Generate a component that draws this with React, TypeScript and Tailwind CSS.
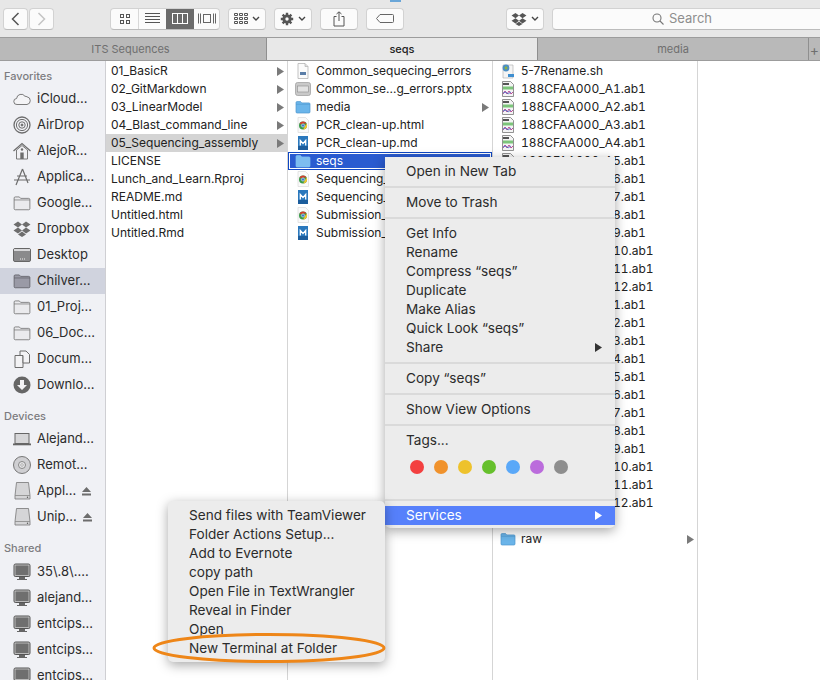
import React from "react"

const font = { fontFamily: "Inter, 'Liberation Sans', sans-serif" }

function Folder({ color = "#6bb5ea", dark = "#4f97cf", size = 16 }: { color?: string; dark?: string; size?: number }) {
  return (
    <svg width={size} height={size} viewBox="0 0 16 16" className="shrink-0">
      <path d="M1 3.5C1 3 1.4 2.6 2 2.6h3.6l1.2 1.3H14c.6 0 1 .4 1 1V13c0 .6-.4 1-1 1H2c-.6 0-1-.4-1-1z" fill={color} stroke={dark} strokeWidth="0.7" />
      <path d="M1 5.3h14" stroke={dark} strokeWidth="0.6" />
    </svg>
  )
}

function Ab1Icon() {
  return (
    <svg width="16" height="16" viewBox="0 0 16 16" className="shrink-0">
      <path d="M2.5 .5h8l3 3v12h-11z" fill="#f4f4f4" stroke="#777" strokeWidth="0.8" />
      <rect x="3" y="5.5" width="10" height="3" fill="#7cc47a" />
      <rect x="3" y="2" width="6" height="2" fill="#555" />
      <path d="M3 13l2-3 2 3 2-3 2 3 2-2" fill="none" stroke="#b33a8c" strokeWidth="0.9" />
      <path d="M3 12l3-1 2 2 3-2" fill="none" stroke="#3760c4" strokeWidth="0.7" />
    </svg>
  )
}

function ChromeIcon() {
  return (
    <svg width="16" height="16" viewBox="0 0 16 16" className="shrink-0">
      <path d="M3 .5h7.5l3 3v12H3z" fill="#fafafa" stroke="#d5d5d5" strokeWidth="0.6" />
      <circle cx="8" cy="8.5" r="4" fill="#3a9a4b" />
      <path d="M8 4.5a4 4 0 0 1 3.5 2H8a2 2 0 0 0-2 1L4.6 6.4A4 4 0 0 1 8 4.5z" fill="#d9392e" />
      <path d="M11.6 6.5a4 4 0 0 1-3.4 6l1.6-3z" fill="#f4c430" />
      <circle cx="8" cy="8.5" r="1.6" fill="#3e76d6" stroke="#fff" strokeWidth="0.5" />
    </svg>
  )
}

function MarkdownIcon() {
  return (
    <svg width="16" height="16" viewBox="0 0 16 16" className="shrink-0">
      <rect x="3" y="1" width="10" height="14" fill="#2a78bd" />
      <rect x="3" y="11" width="10" height="4" fill="#1c5d9c" />
      <path d="M5.3 10.5V5.5l2.7 3 2.7-3v5" fill="none" stroke="#fff" strokeWidth="1.3" />
    </svg>
  )
}

function PptxIcon() {
  return (
    <svg width="16" height="16" viewBox="0 0 16 16" className="shrink-0">
      <rect x="0.5" y="1.5" width="15" height="13" rx="2" fill="#c9c9c9" stroke="#999" strokeWidth="0.7" />
      <rect x="2.5" y="5" width="11" height="6" fill="#e2e2e2" stroke="#8d8d8d" strokeWidth="0.6" />
    </svg>
  )
}

function DocIcon() {
  return (
    <svg width="16" height="16" viewBox="0 0 16 16" className="shrink-0">
      <path d="M3 .5h7l3 3v12H3z" fill="#fbfbfb" stroke="#aaa" strokeWidth="0.7" />
      <path d="M10 .5v3h3" fill="#ddd" stroke="#aaa" strokeWidth="0.6" />
      <rect x="5" y="9" width="6" height="3" fill="#5b7ea8" />
    </svg>
  )
}

function ShellIcon() {
  return (
    <svg width="16" height="16" viewBox="0 0 16 16" className="shrink-0">
      <path d="M3 2h10v13H3z" fill="#f5f5f5" stroke="#aaa" strokeWidth="0.6" />
      <rect x="8" y="11" width="6" height="3" fill="#3f8fd0" />
      <circle cx="6" cy="5" r="3.4" fill="#4c8fc4" />
      <circle cx="6" cy="5" r="1.4" fill="#8fb23e" />
    </svg>
  )
}

function Caret({ color = "#7a7a7a" }: { color?: string }) {
  return (
    <svg width="7" height="9" viewBox="0 0 7 9" className="shrink-0">
      <path d="M0 0l7 4.5L0 9z" fill={color} />
    </svg>
  )
}

function Chevron() {
  return (
    <svg width="8" height="6" viewBox="0 0 8 6">
      <path d="M1 1l3 3 3-3" fill="none" stroke="#444" strokeWidth="1.4" />
    </svg>
  )
}

function SideIcon({ kind }: { kind: string }) {
  const s = "#6d6d6d"
  if (kind === "cloud")
    return (
      <svg width="18" height="18" viewBox="0 0 18 18" className="shrink-0">
        <path d="M4 14.5a3 3 0 0 1-.4-6A4.6 4.6 0 0 1 12 6.3a3 3 0 0 1 2 .5 3.9 3.9 0 0 1 0 7.7z" fill="#f4f4f6" stroke={s} strokeWidth="0.9" />
      </svg>
    )
  if (kind === "airdrop")
    return (
      <svg width="18" height="18" viewBox="0 0 18 18" fill="none" stroke={s} className="shrink-0">
        <circle cx="9" cy="9" r="8" strokeWidth="1.3" />
        <circle cx="9" cy="9" r="5.6" strokeWidth="1" />
        <circle cx="9" cy="9" r="3.2" strokeWidth="1" />
        <circle cx="9" cy="9" r="1" fill={s} />
      </svg>
    )
  if (kind === "home")
    return (
      <svg width="18" height="18" viewBox="0 0 18 18" className="shrink-0">
        <path d="M.5 9L9 1.5 17.5 9" fill="none" stroke={s} strokeWidth="1.3" />
        <path d="M3.5 8v9h11V8L9 3.5z" fill="#f0f0f3" stroke={s} strokeWidth="0.9" />
        <rect x="7.3" y="10.5" width="3.4" height="6.5" fill={s} />
        <circle cx="9" cy="7.5" r="1.2" fill={s} />
      </svg>
    )
  if (kind === "apps")
    return (
      <svg width="18" height="18" viewBox="0 0 18 18" fill="none" stroke={s} strokeWidth="1.2" className="shrink-0">
        <path d="M9.5 1L3 17M9.5 1l5.5 14M1 12h16M4 8l10 0" />
      </svg>
    )
  if (kind === "dropbox")
    return (
      <svg width="18" height="18" viewBox="0 0 18 18" fill={s} className="shrink-0">
        <path d="M5 1.5L.5 4.5 5 7.5l4-3zM13 1.5l4.5 3-4.5 3-4-3zM5 7.5l-4.5 3 4.5 3 4-3zM13 7.5l4.5 3-4.5 3-4-3zM5 14.4l4-2.8 4 2.8-4 2.6z" />
      </svg>
    )
  if (kind === "desktop")
    return (
      <svg width="18" height="16" viewBox="0 0 18 16" className="shrink-0">
        <rect x="0.5" y="1.5" width="17" height="13" rx="1.5" fill="#8a8a8c" stroke="#666" />
        <rect x="1" y="2" width="16" height="2" fill="#d8d8da" />
        <path d="M7 12h1M9 12h1M11 12h1" stroke="#eee" strokeWidth="1.2" />
      </svg>
    )
  if (kind === "folder") return <Folder color="#eaeaed" dark="#6d6d6d" size={18} />
  if (kind === "folderSel") return <Folder color="#9a9aa6" dark="#5b5b62" size={18} />
  if (kind === "docs")
    return (
      <svg width="18" height="18" viewBox="0 0 18 18" fill="#f3f3f5" stroke={s} strokeWidth="1" className="shrink-0">
        <path d="M2 5.5h8v12H2z" />
        <path d="M7 1h6l3.5 3.5V13H10V5.5H7z" />
      </svg>
    )
  if (kind === "down")
    return (
      <svg width="18" height="18" viewBox="0 0 18 18" className="shrink-0">
        <circle cx="9" cy="9" r="8.5" fill="#666" />
        <path d="M7 4h4v5h3l-5 5-5-5h3z" fill="#f3f3f5" />
      </svg>
    )
  if (kind === "laptop")
    return (
      <svg width="18" height="14" viewBox="0 0 18 14" className="shrink-0">
        <rect x="2" y="1.5" width="14" height="10" fill="#d6d6d8" stroke="#666" />
        <rect x="0" y="11.5" width="18" height="1.8" fill="#666" />
      </svg>
    )
  if (kind === "disc")
    return (
      <svg width="18" height="18" viewBox="0 0 18 18" className="shrink-0">
        <circle cx="9" cy="9" r="8.5" fill="#cfcfd2" stroke="#777" />
        <circle cx="9" cy="9" r="3.5" fill="#e7e7e9" stroke="#888" />
        <circle cx="9" cy="9" r="1.3" fill="#f7f7f8" stroke="#888" strokeWidth="0.6" />
      </svg>
    )
  if (kind === "drive")
    return (
      <svg width="17" height="18" viewBox="0 0 17 18" className="shrink-0">
        <path d="M2.500.5h12L16 13.500v3.500H1v-3.500z" fill="#d5d5d7" stroke="#777" strokeWidth="0.8" />
        <path d="M1 13.500h15" stroke="#888" strokeWidth="0.8" />
        <circle cx="13.500" cy="15.300" r="0.7" fill="#555" />
      </svg>
    )
  return (
    <svg width="18" height="18" viewBox="0 0 18 18" className="shrink-0">
      <rect x="1" y="1" width="16" height="12.500" rx="1.500" fill="#666" stroke="#555" />
      <rect x="2" y="2" width="14" height="10.500" fill="#6f6f6f" stroke="#eee" strokeWidth="0.6" />
      <path d="M6 14h6v2h2v1H4v-1h2z" fill="#666" />
    </svg>
  )
}

function SideRow({ icon, label, selected, eject }: { icon: string; label: string; selected?: boolean; eject?: boolean }) {
  return (
    <div className={`flex h-[26px] items-center gap-[6px] pl-[13px] text-[13px] text-[#2c2c2c] ${selected ? "bg-[#d0d3de]" : ""}`}>
      <span className="flex w-[18px] shrink-0 justify-center">
        <SideIcon kind={icon} />
      </span>
      <span className="whitespace-nowrap">{label}</span>
      {eject && (
        <svg width="9" height="9" viewBox="0 0 9 9" className="ml-auto mr-[14px] shrink-0">
          <path d="M4.500 0L9 5H0zM0 6.500h9V8.500H0z" fill="#6d6d6d" />
        </svg>
      )}
    </div>
  )
}

function SideHead({ children, className = "" }: { children: React.ReactNode; className?: string }) {
  return <div className={`flex h-[28px] items-end pl-[4px] text-[11px] font-medium text-[#7c7c80] ${className}`}>{children}</div>
}

function Row({ icon, label, caret, className = "" }: { icon?: React.ReactNode; label: string; caret?: boolean; className?: string }) {
  return (
    <div className={`flex h-[18px] items-center whitespace-nowrap pr-[3px] text-[12px] text-[#222] ${icon ? "pl-[6px]" : "pl-[5px]"} ${className}`}>
      {icon && <span className="mr-[5px] flex w-[17px] justify-center">{icon}</span>}
      <span className="flex-1 overflow-hidden">{label}</span>
      {caret && <Caret />}
    </div>
  )
}

function ToolBtn({ children, className = "" }: { children: React.ReactNode; className?: string }) {
  return (
    <div className={`flex h-[22px] shrink-0 items-center justify-center gap-[4px] rounded-[4px] border border-[#d2d2d2] border-b-[#bcbcbc] bg-[#fbfbfb] ${className}`}>
      {children}
    </div>
  )
}

function Sep() {
  return <div className="my-[5px] h-[2px] bg-[#dadada]" />
}

function MenuItem({ label, arrow, active }: { label: string; arrow?: boolean; active?: boolean }) {
  return (
    <div className={`flex h-[19px] items-center justify-between pl-[21px] pr-[13px] text-[13.600px] ${active ? "bg-[#5680fb] text-white" : "text-[#2b2b2b]"}`}>
      <span className="whitespace-nowrap">{label}</span>
      {arrow && <Caret color={active ? "#ffffff" : "#333333"} />}
    </div>
  )
}

const col1 = ["01_BasicR", "02_GitMarkdown", "03_LinearModel", "04_Blast_command_line", "05_Sequencing_assembly"]
const col1b = ["LICENSE", "Lunch_and_Learn.Rproj", "README.md", "Untitled.html", "Untitled.Rmd"]
const wells = ["A", "B"].flatMap((l) => Array.from({ length: 12 }, (_, i) => `188CFAA000_${l}${i + 1}.ab1`))
const tagColors = ["bg-[#f34040]", "bg-[#f0922c]", "bg-[#eec22c]", "bg-[#66c02c]", "bg-[#5aa8f8]", "bg-[#bb6cdc]", "bg-[#8e8e8e]"]

export default function App() {
  return (
    <div className="relative flex h-[680px] w-[820px] flex-col overflow-hidden bg-white" style={font}>
      {/* toolbar */}
      <div className="flex h-[37px] shrink-0 items-center bg-[#e7e7e7] pl-[3px]">
        <ToolBtn className="w-[25px]">
          <svg width="9" height="14" viewBox="0 0 9 14"><path d="M7.500 1L1.500 7l6 6" fill="none" stroke="#555" strokeWidth="1.500" /></svg>
        </ToolBtn>
        <ToolBtn className="ml-[1px] w-[25px]">
          <svg width="9" height="14" viewBox="0 0 9 14"><path d="M1.500 1l6 6-6 6" fill="none" stroke="#c4c4c4" strokeWidth="1.500" /></svg>
        </ToolBtn>
        <div className="ml-[56px] flex h-[22px] w-[110px] shrink-0 overflow-hidden rounded-[4px] border border-[#d2d2d2] border-b-[#bcbcbc] bg-[#fbfbfb]">
          <div className="flex w-[28px] items-center justify-center border-r border-[#d8d8d8]">
            <svg width="12" height="12" viewBox="0 0 12 12" fill="none" stroke="#555"><rect x="1.500" y="1.500" width="3" height="3" /><rect x="7.500" y="1.500" width="3" height="3" /><rect x="1.500" y="7.500" width="3" height="3" /><rect x="7.500" y="7.500" width="3" height="3" /></svg>
          </div>
          <div className="flex w-[27px] items-center justify-center">
            <svg width="15" height="11" viewBox="0 0 15 11" stroke="#555"><path d="M0 .500h15M0 3.500h15M0 6.500h15M0 9.500h15" /></svg>
          </div>
          <div className="flex w-[28px] items-center justify-center bg-[#6b6b6b]">
            <svg width="16" height="11" viewBox="0 0 16 11" fill="none" stroke="#fff"><rect x=".500" y=".500" width="15" height="10" /><path d="M5.500 .500v10M10.500 .500v10" /></svg>
          </div>
          <div className="flex flex-1 items-center justify-center">
            <svg width="18" height="11" viewBox="0 0 18 11" fill="none" stroke="#666"><rect x="5.500" y="1.500" width="7" height="8" /><path d="M.500 .500v10M2.500 .500v10M15.500 .500v10M17.500 .500v10" /></svg>
          </div>
        </div>
        <ToolBtn className="ml-[8px] w-[38px]">
          <svg width="14" height="12" viewBox="0 0 14 12" fill="none" stroke="#555"><path d="M.500 .500h3v2h-3zM5.500 .500h3v2h-3zM10.500 .500h3v2h-3zM.500 4.500h3v2h-3zM5.500 4.500h3v2h-3zM10.500 4.500h3v2h-3zM.500 8.500h3v2h-3zM5.500 8.500h3v2h-3zM10.500 8.500h3v2h-3z" /></svg>
          <Chevron />
        </ToolBtn>
        <ToolBtn className="ml-[8px] w-[38px]">
          <svg width="14" height="14" viewBox="0 0 14 14"><path d="M7 7V.800M7 7v6.200M7 7H.800M7 7h6.200M7 7L2.600 2.600M7 7l4.400 4.400M7 7l4.400-4.400M7 7l-4.400 4.400" stroke="#555" strokeWidth="2.400" /><circle cx="7" cy="7" r="4.600" fill="#555" /><circle cx="7" cy="7" r="1.700" fill="#fbfbfb" /></svg>
          <Chevron />
        </ToolBtn>
        <ToolBtn className="ml-[8px] w-[38px]">
          <svg width="12" height="16" viewBox="0 0 12 16" fill="none" stroke="#555"><path d="M3.500 5.500H1v9.500h10V5.500H8.500M6 10V1M3.500 3L6 .800 8.500 3" /></svg>
        </ToolBtn>
        <ToolBtn className="ml-[8px] w-[38px]">
          <svg width="18" height="9" viewBox="0 0 18 9" fill="none" stroke="#666"><path d="M4 .500h12.500a1 1 0 0 1 1 1v6a1 1 0 0 1-1 1H4L.500 4.500z" /></svg>
        </ToolBtn>
        <ToolBtn className="ml-[102px] w-[38px]">
          <svg width="16" height="14" viewBox="0 0 18 16" fill="#555"><path d="M5 1L.500 4 5 7l4-3zM13 1l4.500 3L13 7 9 4zM5 7L.500 10 5 13l4-3zM13 7l4.500 3L13 13l-4-3zM5 13.800l4-2.800 4 2.800L9 16z" /></svg>
          <Chevron />
        </ToolBtn>
        <div className="ml-[8px] flex h-[22px] w-[280px] shrink-0 items-center justify-center gap-[5px] rounded-[4px] border border-[#d2d2d2] border-b-[#bcbcbc] bg-[#fbfbfb] pr-[20px] text-[13px] text-[#8e8e8e]">
          <svg width="12" height="12" viewBox="0 0 12 12" fill="none" stroke="#777" strokeWidth="1.100"><circle cx="5" cy="5" r="4" /><path d="M8 8l3.500 3.500" /></svg>
          Search
        </div>
      </div>

      {/* tab bar */}
      <div className="flex h-[24px] shrink-0 border-y border-[#9c9c9c] text-[11px]">
        <div className="flex w-[267px] items-center justify-center border-r border-[#8f8f8f] bg-[#b9b9b9] pr-[5px] text-[#6f6f6f]">ITS Sequences</div>
        <div className="flex w-[271px] items-center justify-center border-r border-[#8f8f8f] bg-[#e8e8e8] font-medium text-[#222]">seqs</div>
        <div className="flex w-[271px] items-center justify-center border-r border-[#8f8f8f] bg-[#b9b9b9] text-[#6f6f6f]">media</div>
        <div className="flex flex-1 items-center justify-center bg-[#b9b9b9] text-[14px] text-[#6f6f6f]">+</div>
      </div>

      {/* body */}
      <div className="flex min-h-0 flex-1">
        {/* sidebar */}
        <div className="w-[106px] shrink-0 border-r border-[#cfcfd3] bg-[#f0f1f5]">
          <SideHead className="-mt-[3px] pb-[2px]">Favorites</SideHead>
          <SideRow icon="cloud" label="iCloud..." />
          <SideRow icon="airdrop" label="AirDrop" />
          <SideRow icon="home" label="AlejoR..." />
          <SideRow icon="apps" label="Applica..." />
          <SideRow icon="folder" label="Google..." />
          <SideRow icon="dropbox" label="Dropbox" />
          <SideRow icon="desktop" label="Desktop" />
          <SideRow icon="folderSel" label="Chilver..." selected />
          <SideRow icon="folder" label="01_Proj..." />
          <SideRow icon="folder" label="06_Doc..." />
          <SideRow icon="docs" label="Docum..." />
          <SideRow icon="down" label="Downlo..." />
          <SideHead className="pb-[2px]">Devices</SideHead>
          <SideRow icon="laptop" label="Alejand..." />
          <SideRow icon="disc" label="Remot..." />
          <SideRow icon="drive" label="Appl..." eject />
          <SideRow icon="drive" label="Unip..." eject />
          <SideHead className="mt-px pb-[3px]">Shared</SideHead>
          <SideRow icon="screen" label="35\.8\...." />
          <SideRow icon="screen" label="alejand..." />
          <SideRow icon="screen" label="entcips..." />
          <SideRow icon="screen" label="entcips..." />
          <SideRow icon="screen" label="entcips..." />
        </div>

        {/* column 1 */}
        <div className="w-[182px] shrink-0 border-r border-[#d5d5d5] pt-[1px]">
          {col1.map((n, i) => (
            <Row key={n} label={n} caret className={i === 4 ? "bg-[#d4d4d4]" : ""} />
          ))}
          {col1b.map((n) => (
            <Row key={n} label={n} />
          ))}
        </div>

        {/* column 2 */}
        <div className="w-[205px] shrink-0 border-r border-[#d5d5d5] pt-[1px]">
          <Row icon={<DocIcon />} label="Common_sequecing_errors" />
          <Row icon={<PptxIcon />} label="Common_se...g_errors.pptx" />
          <Row icon={<Folder />} label="media" caret />
          <Row icon={<ChromeIcon />} label="PCR_clean-up.html" />
          <Row icon={<MarkdownIcon />} label="PCR_clean-up.md" />
          <div className="h-[18px] border border-[#0f47c4] p-px">
            <div className="flex h-full items-center bg-[#2a5bd0] pl-[4px] text-[12px] text-white">
              <span className="mr-[5px] flex w-[17px] justify-center"><Folder color="#7dbdf0" dark="#7dbdf0" /></span>
              seqs
            </div>
          </div>
          <Row icon={<ChromeIcon />} label="Sequencing_" />
          <Row icon={<MarkdownIcon />} label="Sequencing_" />
          <Row icon={<ChromeIcon />} label="Submission_" />
          <Row icon={<MarkdownIcon />} label="Submission_" />
        </div>

        {/* column 3 */}
        <div className="w-[205px] shrink-0 border-r border-[#d5d5d5] pt-[1px]">
          <Row icon={<ShellIcon />} label="5-7Rename.sh" />
          {wells.map((w) => (
            <Row key={w} icon={<Ab1Icon />} label={w} className="tabular-nums" />
          ))}
          <div className="h-[18px]" />
          <Row icon={<Folder />} label="raw" caret />
        </div>
      </div>

      {/* title sliver above the toolbar */}
      <div className="absolute left-[390px] top-0 h-[2px] w-[11px] bg-[#6aa6d8]" />

      {/* context menu */}
      <div className="absolute left-[385px] top-[157px] w-[230px] rounded-b-[5px] bg-[#ececec] pb-[3px] pt-[5px] shadow-[0_3px_12px_rgba(0,0,0,0.35)]">
        <MenuItem label="Open in New Tab" />
        <Sep />
        <MenuItem label="Move to Trash" />
        <Sep />
        <MenuItem label="Get Info" />
        <MenuItem label="Rename" />
        <MenuItem label="Compress “seqs”" />
        <MenuItem label="Duplicate" />
        <MenuItem label="Make Alias" />
        <MenuItem label="Quick Look “seqs”" />
        <MenuItem label="Share" arrow />
        <Sep />
        <MenuItem label="Copy “seqs”" />
        <Sep />
        <MenuItem label="Show View Options" />
        <Sep />
        <MenuItem label="Tags..." />
        <div className="flex h-[49px] items-start gap-[10px] pl-[25px] pt-[10px]">
          {tagColors.map((c) => (
            <span key={c} className={`h-[14px] w-[14px] rounded-full ${c}`} />
          ))}
        </div>
        <div className="mb-[5px] h-[2px] bg-[#dadada]" />
        <MenuItem label="Services" arrow active />
      </div>

      {/* services submenu */}
      <div className="absolute left-[168px] top-[501px] w-[217px] rounded-[5px] bg-[#ececec] pb-[4px] pt-[5px] shadow-[0_3px_12px_rgba(0,0,0,0.35)]">
        <MenuItem label="Send files with TeamViewer" />
        <MenuItem label="Folder Actions Setup..." />
        <MenuItem label="Add to Evernote" />
        <MenuItem label="copy path" />
        <MenuItem label="Open File in TextWrangler" />
        <MenuItem label="Reveal in Finder" />
        <MenuItem label="Open" />
        <MenuItem label="New Terminal at Folder" />
      </div>

      {/* orange ellipse */}
      <svg width="240" height="34" viewBox="0 0 240 34" className="absolute left-[151px] top-[632px]">
        <ellipse cx="118" cy="16" rx="115" ry="13.500" fill="none" stroke="#ee8618" strokeWidth="3" />
      </svg>
    </div>
  )
}
